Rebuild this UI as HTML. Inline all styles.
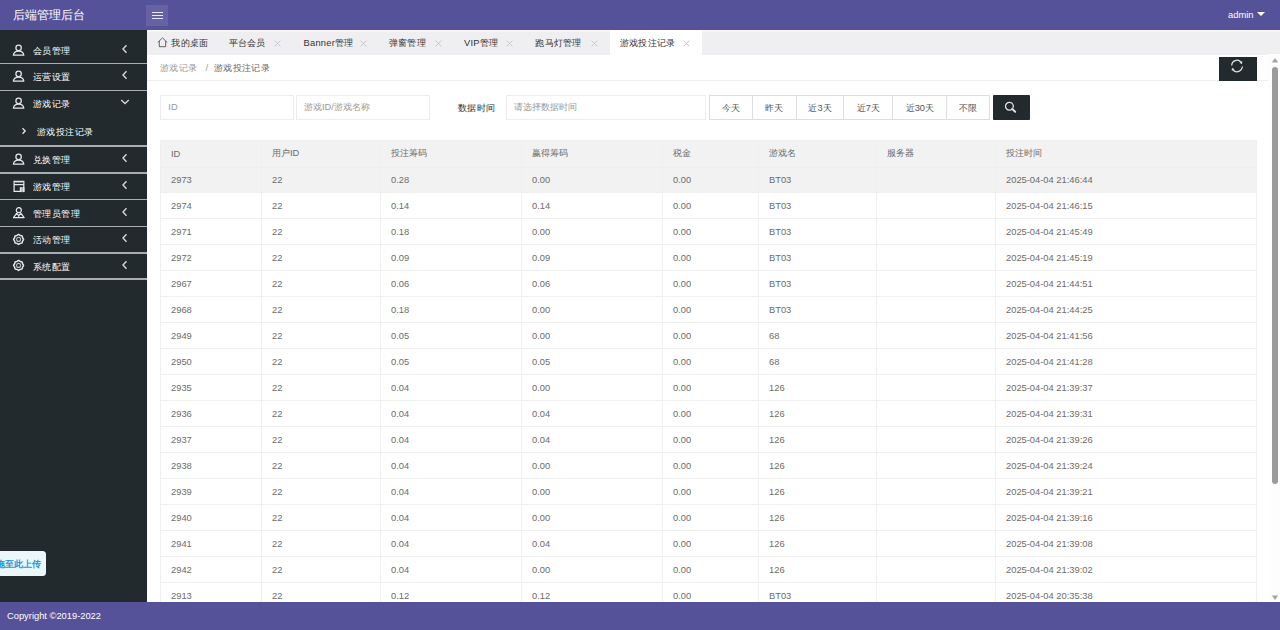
<!DOCTYPE html>
<html><head><meta charset="utf-8">
<style>
*{margin:0;padding:0;box-sizing:border-box;}
html,body{width:1280px;height:630px;overflow:hidden;background:#fff;font-family:"Liberation Sans",sans-serif;}
.abs{position:absolute;}
#hdr{position:absolute;left:0;top:0;width:1280px;height:30.4px;background:#55529a;z-index:5;}
#logo{position:absolute;left:13px;top:6.5px;color:#fff;font-size:12px;line-height:16px;white-space:nowrap;}
#ham{position:absolute;left:146px;top:5px;width:22px;height:21px;background:#6762a6;}
#ham i{position:absolute;left:6px;width:11px;height:1.3px;background:#e8e6f5;}
#admin{position:absolute;left:1228px;top:8px;color:#fff;font-size:9.33px;line-height:14px;}
#admin b{position:absolute;left:29px;top:4px;width:0;height:0;border-left:4px solid transparent;border-right:4px solid transparent;border-top:4.5px solid #fff;}
#side{position:absolute;left:0;top:30px;width:146.6px;height:572px;background:#222a2e;}
#side .t{position:absolute;color:#fff;font-size:9.33px;line-height:14px;white-space:nowrap;letter-spacing:0.4px;}
#side .ico{position:absolute;left:11.5px;width:14px;height:14px;}
#side .ico svg{display:block;}
#side .ar{position:absolute;}
#side svg{display:block;}
.sep{position:absolute;left:0;width:147px;height:1.5px;background:#a9aeb0;}
#foot{position:absolute;left:0;top:602px;width:1280px;height:28px;background:#55529a;color:#fff;font-size:9.33px;}
#foot span{position:absolute;left:7px;top:9px;line-height:11px;}
#tabs{position:absolute;left:146.6px;top:30px;width:1134px;height:24.5px;background:#efeff1;box-shadow:inset 0 1.4px #fafafc;}
.tab{position:absolute;top:0;height:24.5px;color:#333;font-size:9.33px;line-height:26.5px;white-space:nowrap;letter-spacing:0.25px;}
.tab.act{background:#fff;}
.tab .x{position:absolute;top:0;color:#bbb;font-size:10px;}
#crumb{position:absolute;left:147px;top:54.5px;width:1121px;height:26px;background:#fff;border-bottom:1px solid #ececec;}
#crumb span{position:absolute;top:7px;font-size:9.33px;line-height:12px;white-space:nowrap;letter-spacing:0.45px;}
#refresh{position:absolute;left:1219px;top:57px;width:38px;height:24px;background:#222a2e;}
#sb{position:absolute;left:1268px;top:54px;width:12px;height:548px;background:#fdfdfd;}
#sbthumb{position:absolute;left:1272px;top:67px;width:6px;height:417px;background:#9a9a9a;border-radius:3px;}
.inp{position:absolute;top:95px;height:25px;border:1px solid #ececec;background:#fff;font-size:9.33px;color:#999;}
.inp span{position:absolute;top:5px;line-height:12px;white-space:nowrap;}
#btns{position:absolute;left:709px;top:95px;height:25px;}
.bt{position:absolute;top:0;height:25px;border:1px solid #dedede;background:#fff;font-size:9.33px;color:#555;text-align:center;line-height:25px;}
#search{position:absolute;left:993px;top:95.3px;width:37.4px;height:24.8px;background:#222a2e;border-radius:1px;}
#tbl{position:absolute;left:160px;top:140px;border-collapse:collapse;font-size:9.33px;color:#6c6c6c;}
#tbl td,#tbl th{border:1px solid #efefef;height:26px;padding:0.5px 0 0 10px;text-align:left;font-weight:normal;white-space:nowrap;}
#tbl th{background:#f2f2f2;height:27px;padding-top:0;padding-bottom:0.5px;}
#tbl tr.hl td{background:#f2f2f2;height:25px;}
#upl{position:absolute;left:-6px;top:551px;width:52px;height:24.5px;background:#ecf7fb;border-radius:3.5px;color:#1f96d4;font-size:9.33px;font-weight:bold;line-height:26px;text-align:right;padding-right:5px;white-space:nowrap;overflow:hidden;}
</style></head><body>
<div id="hdr">
  <div id="logo">后端管理后台</div>
  <div id="ham"><i style="top:7px"></i><i style="top:10px"></i><i style="top:13px"></i></div>
  <div id="admin">admin<b></b></div>
</div>
<div id="side">
<span class="ico" style="top:13.65px"><svg class="ic" width="14" height="14" viewBox="0 0 14 14"><circle cx="6.6" cy="3.9" r="2.7" fill="none" stroke="#e6e8e8" stroke-width="1.25"/><path d="M1.4 11.2 C1.6 8.4 3.8 7.1 6.6 7.1 C9.4 7.1 11.6 8.4 11.8 11.2 Z" fill="none" stroke="#e6e8e8" stroke-width="1.25" stroke-linejoin="round"/></svg></span>
<span class="t" style="left:33px;top:14.15px">会员管理</span>
<span class="ar" style="left:120.5px;top:14.15px"><svg width="8" height="10" viewBox="0 0 8 10"><path d="M5.5 1.2 L2 5 L5.5 8.8" fill="none" stroke="#d5d8d8" stroke-width="1.4"/></svg></span>
<div class="sep" style="top:32.65px"></div>
<span class="ico" style="top:39.90px"><svg class="ic" width="14" height="14" viewBox="0 0 14 14"><circle cx="6.6" cy="3.9" r="2.7" fill="none" stroke="#e6e8e8" stroke-width="1.25"/><path d="M1.4 11.2 C1.6 8.4 3.8 7.1 6.6 7.1 C9.4 7.1 11.6 8.4 11.8 11.2 Z" fill="none" stroke="#e6e8e8" stroke-width="1.25" stroke-linejoin="round"/></svg></span>
<span class="t" style="left:33px;top:40.40px">运营设置</span>
<span class="ar" style="left:120.5px;top:40.40px"><svg width="8" height="10" viewBox="0 0 8 10"><path d="M5.5 1.2 L2 5 L5.5 8.8" fill="none" stroke="#d5d8d8" stroke-width="1.4"/></svg></span>
<div class="sep" style="top:59.55px"></div>
<span class="ico" style="top:66.70px"><svg class="ic" width="14" height="14" viewBox="0 0 14 14"><circle cx="6.6" cy="3.9" r="2.7" fill="none" stroke="#e6e8e8" stroke-width="1.25"/><path d="M1.4 11.2 C1.6 8.4 3.8 7.1 6.6 7.1 C9.4 7.1 11.6 8.4 11.8 11.2 Z" fill="none" stroke="#e6e8e8" stroke-width="1.25" stroke-linejoin="round"/></svg></span>
<span class="t" style="left:33px;top:67.20px">游戏记录</span>
<span class="ar" style="left:119.5px;top:67.70px"><svg width="10" height="8" viewBox="0 0 10 8"><path d="M1.2 2 L5 5.5 L8.8 2" fill="none" stroke="#d5d8d8" stroke-width="1.4"/></svg></span>
<svg class="abs" style="left:20.5px;top:97.00px" width="6" height="8" viewBox="0 0 6 8"><path d="M1.5 1.2 L4.2 4 L1.5 6.8" fill="none" stroke="#e6e8e8" stroke-width="1.3"/></svg>
<span class="t" style="left:37px;top:94.50px">游戏投注记录</span>
<div class="sep" style="top:115.15px"></div>
<span class="ico" style="top:122.60px"><svg class="ic" width="14" height="14" viewBox="0 0 14 14"><circle cx="6.6" cy="3.9" r="2.7" fill="none" stroke="#e6e8e8" stroke-width="1.25"/><path d="M1.4 11.2 C1.6 8.4 3.8 7.1 6.6 7.1 C9.4 7.1 11.6 8.4 11.8 11.2 Z" fill="none" stroke="#e6e8e8" stroke-width="1.25" stroke-linejoin="round"/></svg></span>
<span class="t" style="left:33px;top:123.10px">兑换管理</span>
<span class="ar" style="left:120.5px;top:123.10px"><svg width="8" height="10" viewBox="0 0 8 10"><path d="M5.5 1.2 L2 5 L5.5 8.8" fill="none" stroke="#d5d8d8" stroke-width="1.4"/></svg></span>
<div class="sep" style="top:142.15px"></div>
<span class="ico" style="top:149.60px"><svg class="ic" width="14" height="14" viewBox="0 0 14 14"><path d="M2.1 1.4 H11.8 V11.4 H2.1 Z M2.1 4.6 H11.8" fill="none" stroke="#e6e8e8" stroke-width="1.25"/><path d="M2.1 2.6 H11.8" stroke="#9aa0a0" stroke-width="0.8"/><rect x="7.8" y="7.2" width="4.6" height="4.9" fill="#e6e8e8"/><path d="M10.1 7.6 V12" stroke="#6a7070" stroke-width="0.7"/></svg></span>
<span class="t" style="left:33px;top:150.10px">游戏管理</span>
<span class="ar" style="left:120.5px;top:150.10px"><svg width="8" height="10" viewBox="0 0 8 10"><path d="M5.5 1.2 L2 5 L5.5 8.8" fill="none" stroke="#d5d8d8" stroke-width="1.4"/></svg></span>
<div class="sep" style="top:168.65px"></div>
<span class="ico" style="top:176.10px"><svg class="ic" width="14" height="14" viewBox="0 0 14 14"><circle cx="6.8" cy="4.2" r="2.5" fill="none" stroke="#e6e8e8" stroke-width="1.2"/><path d="M1.5 11.7 L4.6 7.3 L6.8 9.6 L9 7.3 L12.1 11.7 Z" fill="none" stroke="#e6e8e8" stroke-width="1.2" stroke-linejoin="round"/><path d="M6.8 9.6 V11.7" stroke="#e6e8e8" stroke-width="1"/></svg></span>
<span class="t" style="left:33px;top:176.60px">管理员管理</span>
<span class="ar" style="left:120.5px;top:176.60px"><svg width="8" height="10" viewBox="0 0 8 10"><path d="M5.5 1.2 L2 5 L5.5 8.8" fill="none" stroke="#d5d8d8" stroke-width="1.4"/></svg></span>
<div class="sep" style="top:195.85px"></div>
<span class="ico" style="top:202.60px"><svg class="ic" width="14" height="14" viewBox="0 0 14 14"><path d="M6.60 1.40 L8.25 2.43 L10.14 2.86 L10.57 4.75 L11.60 6.40 L10.57 8.05 L10.14 9.94 L8.25 10.37 L6.60 11.40 L4.95 10.37 L3.06 9.94 L2.63 8.05 L1.60 6.40 L2.63 4.75 L3.06 2.86 L4.95 2.43 Z" fill="none" stroke="#e6e8e8" stroke-width="1.5" stroke-linejoin="round"/><circle cx="6.6" cy="6.4" r="2" fill="none" stroke="#b8bcbc" stroke-width="1.1"/></svg></span>
<span class="t" style="left:33px;top:203.10px">活动管理</span>
<span class="ar" style="left:120.5px;top:203.10px"><svg width="8" height="10" viewBox="0 0 8 10"><path d="M5.5 1.2 L2 5 L5.5 8.8" fill="none" stroke="#d5d8d8" stroke-width="1.4"/></svg></span>
<div class="sep" style="top:222.15px"></div>
<span class="ico" style="top:229.10px"><svg class="ic" width="14" height="14" viewBox="0 0 14 14"><path d="M6.60 1.40 L8.25 2.43 L10.14 2.86 L10.57 4.75 L11.60 6.40 L10.57 8.05 L10.14 9.94 L8.25 10.37 L6.60 11.40 L4.95 10.37 L3.06 9.94 L2.63 8.05 L1.60 6.40 L2.63 4.75 L3.06 2.86 L4.95 2.43 Z" fill="none" stroke="#e6e8e8" stroke-width="1.5" stroke-linejoin="round"/><circle cx="6.6" cy="6.4" r="2" fill="none" stroke="#b8bcbc" stroke-width="1.1"/></svg></span>
<span class="t" style="left:33px;top:229.60px">系统配置</span>
<span class="ar" style="left:120.5px;top:229.60px"><svg width="8" height="10" viewBox="0 0 8 10"><path d="M5.5 1.2 L2 5 L5.5 8.8" fill="none" stroke="#d5d8d8" stroke-width="1.4"/></svg></span>
<div class="sep" style="top:248.35px"></div>
</div>
<div id="tabs">
<div class="tab" style="left:0.9px;width:71.2px"><svg style="position:absolute;left:9.5px;top:6.5px" width="11" height="11" viewBox="0 0 11 11"><path d="M0.8 5.4 L5.5 0.9 L10.2 5.4 M2.3 4.1 V9.7 H8.7 V4.1" fill="none" stroke="#555" stroke-width="0.9" stroke-linejoin="round"/></svg><span style="position:absolute;left:24px">我的桌面</span></div>
<div class="tab" style="left:72.1px;width:74.8px"><span style="position:absolute;left:10px">平台会员</span><svg class="x" style="right:12px;top:9.5px;position:absolute" width="7" height="7" viewBox="0 0 7 7"><path d="M0.6 0.6 L6.4 6.4 M6.4 0.6 L0.6 6.4" stroke="#c4c4c4" stroke-width="0.9"/></svg></div>
<div class="tab" style="left:146.9px;width:85.5px"><span style="position:absolute;left:10px">Banner管理</span><svg class="x" style="right:12px;top:9.5px;position:absolute" width="7" height="7" viewBox="0 0 7 7"><path d="M0.6 0.6 L6.4 6.4 M6.4 0.6 L0.6 6.4" stroke="#c4c4c4" stroke-width="0.9"/></svg></div>
<div class="tab" style="left:232.4px;width:75.0px"><span style="position:absolute;left:10px">弹窗管理</span><svg class="x" style="right:12px;top:9.5px;position:absolute" width="7" height="7" viewBox="0 0 7 7"><path d="M0.6 0.6 L6.4 6.4 M6.4 0.6 L0.6 6.4" stroke="#c4c4c4" stroke-width="0.9"/></svg></div>
<div class="tab" style="left:307.4px;width:71.0px"><span style="position:absolute;left:10px">VIP管理</span><svg class="x" style="right:12px;top:9.5px;position:absolute" width="7" height="7" viewBox="0 0 7 7"><path d="M0.6 0.6 L6.4 6.4 M6.4 0.6 L0.6 6.4" stroke="#c4c4c4" stroke-width="0.9"/></svg></div>
<div class="tab" style="left:378.9px;width:84.5px"><span style="position:absolute;left:10px">跑马灯管理</span><svg class="x" style="right:12px;top:9.5px;position:absolute" width="7" height="7" viewBox="0 0 7 7"><path d="M0.6 0.6 L6.4 6.4 M6.4 0.6 L0.6 6.4" stroke="#c4c4c4" stroke-width="0.9"/></svg></div>
<div class="tab act" style="left:463.4px;width:92.0px"><span style="position:absolute;left:10px">游戏投注记录</span><svg class="x" style="right:12px;top:9.5px;position:absolute" width="7" height="7" viewBox="0 0 7 7"><path d="M0.6 0.6 L6.4 6.4 M6.4 0.6 L0.6 6.4" stroke="#c4c4c4" stroke-width="0.9"/></svg></div>
</div>
<div id="crumb">
  <span style="left:13px;color:#999">游戏记录</span>
  <span style="left:58.6px;color:#999">/</span>
  <span style="left:66.7px;color:#666">游戏投注记录</span>
</div>
<div id="refresh"><svg style="position:absolute;left:9.9px;top:0.5px" width="16" height="16" viewBox="0 0 16 16"><path d="M2.7 7.4 A5.3 5.3 0 0 1 11.9 4" fill="none" stroke="#dfe3e3" stroke-width="1.25"/><path d="M13.3 8.6 A5.3 5.3 0 0 1 4.1 12" fill="none" stroke="#dfe3e3" stroke-width="1.25"/><path d="M13.2 3 L13.1 6 L10.4 5 Z" fill="#dfe3e3"/><path d="M2.8 13 L2.9 10 L5.6 11 Z" fill="#dfe3e3"/></svg></div>
<div id="sb"></div><div id="sbthumb"></div><svg class="abs" style="left:1271px;top:57px" width="8" height="6" viewBox="0 0 8 6"><path d="M0.8 5.5 L4 1 L7.2 5.5 Z" fill="#a3a3a3"/></svg><svg class="abs" style="left:1271px;top:595px" width="8" height="6" viewBox="0 0 8 6"><path d="M0.8 0.5 L4 5 L7.2 0.5 Z" fill="#a3a3a3"/></svg>
<div class="inp" style="left:160px;width:134px"><span style="left:7.3px">ID</span></div>
<div class="inp" style="left:296px;width:134px"><span style="left:7px">游戏ID/游戏名称</span></div>
<div class="abs" style="left:458px;top:102.3px;font-size:9.33px;color:#2a2a2a;line-height:12px;letter-spacing:0.4px">数据时间</div>
<div class="inp" style="left:506px;width:200px"><span style="left:7px">请选择数据时间</span></div>
<div id="btns">
<div class="bt" style="left:0.0px;width:44.3px">今天</div>
<div class="bt" style="left:43.3px;width:44.3px">昨天</div>
<div class="bt" style="left:86.6px;width:48.8px">近3天</div>
<div class="bt" style="left:134.4px;width:50.0px">近7天</div>
<div class="bt" style="left:183.4px;width:54.9px">近30天</div>
<div class="bt" style="left:237.3px;width:43.7px">不限</div>
</div>
<div id="search"><svg style="position:absolute;left:9px;top:5px" width="16" height="16" viewBox="0 0 16 16"><circle cx="7.4" cy="6.2" r="3.9" fill="none" stroke="#dfe3e3" stroke-width="1.3"/><path d="M10.2 9 L13.2 11.8" stroke="#dfe3e3" stroke-width="1.9" stroke-linecap="round"/></svg></div>
<table id="tbl">
<colgroup><col style="width:101px"><col style="width:119px"><col style="width:141px"><col style="width:141px"><col style="width:96px"><col style="width:118px"><col style="width:119px"><col style="width:261px"></colgroup>
<tr><th>ID</th><th>用户ID</th><th>投注筹码</th><th>赢得筹码</th><th>税金</th><th>游戏名</th><th>服务器</th><th>投注时间</th></tr>
<tr class="hl"><td>2973</td><td>22</td><td>0.28</td><td>0.00</td><td>0.00</td><td>BT03</td><td></td><td>2025-04-04 21:46:44</td></tr>
<tr><td>2974</td><td>22</td><td>0.14</td><td>0.14</td><td>0.00</td><td>BT03</td><td></td><td>2025-04-04 21:46:15</td></tr>
<tr><td>2971</td><td>22</td><td>0.18</td><td>0.00</td><td>0.00</td><td>BT03</td><td></td><td>2025-04-04 21:45:49</td></tr>
<tr><td>2972</td><td>22</td><td>0.09</td><td>0.09</td><td>0.00</td><td>BT03</td><td></td><td>2025-04-04 21:45:19</td></tr>
<tr><td>2967</td><td>22</td><td>0.06</td><td>0.06</td><td>0.00</td><td>BT03</td><td></td><td>2025-04-04 21:44:51</td></tr>
<tr><td>2968</td><td>22</td><td>0.18</td><td>0.00</td><td>0.00</td><td>BT03</td><td></td><td>2025-04-04 21:44:25</td></tr>
<tr><td>2949</td><td>22</td><td>0.05</td><td>0.00</td><td>0.00</td><td>68</td><td></td><td>2025-04-04 21:41:56</td></tr>
<tr><td>2950</td><td>22</td><td>0.05</td><td>0.05</td><td>0.00</td><td>68</td><td></td><td>2025-04-04 21:41:28</td></tr>
<tr><td>2935</td><td>22</td><td>0.04</td><td>0.00</td><td>0.00</td><td>126</td><td></td><td>2025-04-04 21:39:37</td></tr>
<tr><td>2936</td><td>22</td><td>0.04</td><td>0.04</td><td>0.00</td><td>126</td><td></td><td>2025-04-04 21:39:31</td></tr>
<tr><td>2937</td><td>22</td><td>0.04</td><td>0.04</td><td>0.00</td><td>126</td><td></td><td>2025-04-04 21:39:26</td></tr>
<tr><td>2938</td><td>22</td><td>0.04</td><td>0.00</td><td>0.00</td><td>126</td><td></td><td>2025-04-04 21:39:24</td></tr>
<tr><td>2939</td><td>22</td><td>0.04</td><td>0.00</td><td>0.00</td><td>126</td><td></td><td>2025-04-04 21:39:21</td></tr>
<tr><td>2940</td><td>22</td><td>0.04</td><td>0.00</td><td>0.00</td><td>126</td><td></td><td>2025-04-04 21:39:16</td></tr>
<tr><td>2941</td><td>22</td><td>0.04</td><td>0.04</td><td>0.00</td><td>126</td><td></td><td>2025-04-04 21:39:08</td></tr>
<tr><td>2942</td><td>22</td><td>0.04</td><td>0.00</td><td>0.00</td><td>126</td><td></td><td>2025-04-04 21:39:02</td></tr>
<tr><td>2913</td><td>22</td><td>0.12</td><td>0.12</td><td>0.00</td><td>BT03</td><td></td><td>2025-04-04 20:35:38</td></tr>
</table>
<div id="foot"><span>Copyright ©2019-2022</span></div>
<div id="upl">拖至此上传</div>
</body></html>
